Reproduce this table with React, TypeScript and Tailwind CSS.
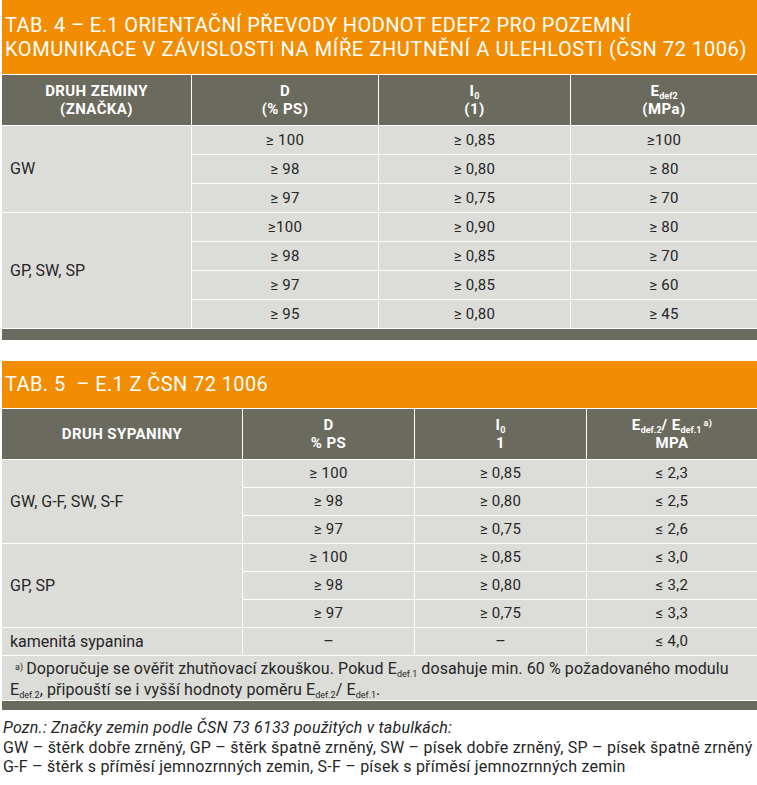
const orange = "bg-[#f28c00]";

function Ge({ v }: { v: string }) {
  return <span className="text-[15px] tracking-[0.3px]">{v}</span>;
}

function Cell({ children, className = "" }: { children: React.ReactNode; className?: string }) {
  return (
    <div className={`bg-[#dcdcd8] flex items-center justify-center text-[16px] text-[#262626] ${className}`}>
      {children}
    </div>
  );
}

function Label({ children, className = "" }: { children: React.ReactNode; className?: string }) {
  return (
    <div className={`bg-[#dcdcd8] flex items-center pl-[8px] text-[16px] text-[#262626] ${className}`}>
      {children}
    </div>
  );
}

function Head({ children }: { children: React.ReactNode }) {
  return (
    <div className="bg-[#6b6a5e] flex flex-col items-center justify-center text-white font-bold text-[15px] leading-[18px] tracking-[0.4px] text-center">
      {children}
    </div>
  );
}

function Sub({ children }: { children: React.ReactNode }) {
  return <sub className="text-[9px] align-baseline relative top-[3px] tracking-normal">{children}</sub>;
}

const tab4 = [
  ["≥ 100", "≥ 0,85", "≥100"],
  ["≥ 98", "≥ 0,80", "≥ 80"],
  ["≥ 97", "≥ 0,75", "≥ 70"],
  ["≥100", "≥ 0,90", "≥ 80"],
  ["≥ 98", "≥ 0,85", "≥ 70"],
  ["≥ 97", "≥ 0,85", "≥ 60"],
  ["≥ 95", "≥ 0,80", "≥ 45"],
];

const tab5 = [
  ["≥ 100", "≥ 0,85", "≤ 2,3"],
  ["≥ 98", "≥ 0,80", "≤ 2,5"],
  ["≥ 97", "≥ 0,75", "≤ 2,6"],
  ["≥ 100", "≥ 0,85", "≤ 3,0"],
  ["≥ 98", "≥ 0,80", "≤ 3,2"],
  ["≥ 97", "≥ 0,75", "≤ 3,3"],
];

export default function App() {
  return (
    <div className="w-[757px] bg-white pl-[2px] font-['Roboto',sans-serif] text-[#262626]">
      {/* Tab. 4 */}
      <div className={`${orange} h-[74px] pt-[13px] pl-[3px] overflow-hidden text-white text-[20px] leading-[24px] tracking-[0.4px]`}>
        <div className="whitespace-nowrap">TAB. 4 – E.1 ORIENTAČNÍ PŘEVODY HODNOT EDEF2 PRO POZEMNÍ</div>
        <div className="whitespace-nowrap tracking-[0.6px]">KOMUNIKACE V ZÁVISLOSTI NA MÍŘE ZHUTNĚNÍ A ULEHLOSTI (ČSN 72 1006)</div>
      </div>
      <div className="grid grid-cols-[189px_186px_191px_1fr] grid-rows-[50px_repeat(7,28px)_11px] gap-px bg-white pt-px">
        <Head>
          <span>DRUH ZEMINY</span>
          <span>(ZNAČKA)</span>
        </Head>
        <Head>
          <span>D</span>
          <span>(% PS)</span>
        </Head>
        <Head>
          <span>I<Sub>0</Sub></span>
          <span>(1)</span>
        </Head>
        <Head>
          <span>E<Sub>def2</Sub></span>
          <span>(MPa)</span>
        </Head>
        {tab4.map((r, i) => (
          <>
            {i === 0 && <Label className="row-span-3">GW</Label>}
            {i === 3 && <Label className="row-span-4">GP, SW, SP</Label>}
            {r.map((v, j) => (
              <Cell key={`${i}-${j}`}>
                <Ge v={v} />
              </Cell>
            ))}
          </>
        ))}
        <div className="col-span-4 bg-[#6b6a5e]" />
      </div>

      {/* Tab. 5 */}
      <div className={`${orange} mt-[21px] h-[47px] pt-[11px] pl-[3px] overflow-hidden text-white text-[20px] leading-[24px] tracking-[0.4px]`}>
        <div className="whitespace-pre">TAB. 5  – E.1 Z ČSN 72 1006</div>
      </div>
      <div className="grid grid-cols-[240px_171px_171px_1fr] grid-rows-[50px_repeat(7,27px)_44px_9px] gap-px bg-white pt-px">
        <Head>
          <span>DRUH SYPANINY</span>
        </Head>
        <Head>
          <span>D</span>
          <span>% PS</span>
        </Head>
        <Head>
          <span>I<Sub>0</Sub></span>
          <span>1</span>
        </Head>
        <Head>
          <span>
            E<Sub>def.2</Sub>/ E<Sub>def.1</Sub>
            <sup className="text-[9px] ml-[2px]">a)</sup>
          </span>
          <span>MPA</span>
        </Head>
        {tab5.map((r, i) => (
          <>
            {i === 0 && <Label className="row-span-3">GW, G-F, SW, S-F</Label>}
            {i === 3 && <Label className="row-span-3">GP, SP</Label>}
            {r.map((v, j) => (
              <Cell key={`${i}-${j}`}>
                <Ge v={v} />
              </Cell>
            ))}
          </>
        ))}
        <Label>kamenitá sypanina</Label>
        <Cell>–</Cell>
        <Cell>–</Cell>
        <Cell>
          <Ge v="≤ 4,0" />
        </Cell>
        <div className="col-span-4 bg-[#dcdcd8] pl-[8px] pt-[2px] text-[16px] leading-[21px] tracking-[0.1px]">
          <div className="pl-[5px] whitespace-nowrap">
            <sup className="text-[9px] mr-[3px]">a)</sup>Doporučuje se ověřit zhutňovací zkouškou. Pokud E
            <Sub>def.1</Sub> dosahuje min. 60 % požadovaného modulu
          </div>
          <div className="whitespace-nowrap">
            E<Sub>def.2</Sub>, připouští se i vyšší hodnoty poměru E<Sub>def.2</Sub>/ E<Sub>def.1</Sub>.
          </div>
        </div>
        <div className="col-span-4 bg-[#6b6a5e]" />
      </div>

      <div className="pt-[8px] pl-px text-[16px] leading-[19.5px] tracking-[0.22px] text-[#262626] whitespace-nowrap">
        <div className="italic">Pozn.: Značky zemin podle ČSN 73 6133 použitých v tabulkách:</div>
        <div>GW – štěrk dobře zrněný, GP – štěrk špatně zrněný, SW – písek dobře zrněný, SP – písek špatně zrněný</div>
        <div>G-F – štěrk s příměsí jemnozrnných zemin, S-F – písek s příměsí jemnozrnných zemin</div>
      </div>
    </div>
  );
}
